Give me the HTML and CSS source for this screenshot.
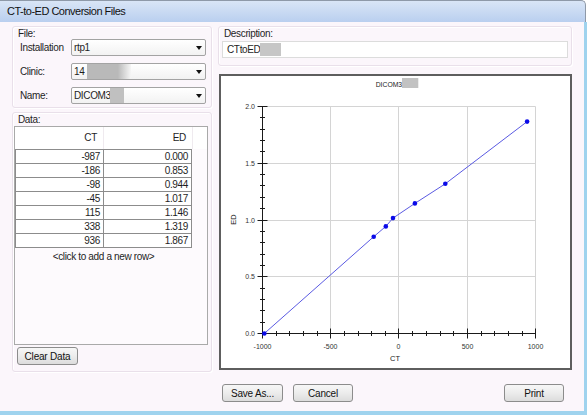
FILE: index.html
```html
<!DOCTYPE html>
<html>
<head>
<meta charset="utf-8">
<link rel="stylesheet" href="styles.css">
</head>
<body>
<div class="window">
  <div class="titlebar">CT-to-ED Conversion Files</div>
  <div class="client">
    <div class="main">
      <div class="col-left">
        <div class="group file-group">
          <div class="group-label">File:</div>
          <div class="field">
            <span class="field-label">Installation</span>
            <div class="combo"><span class="combo-text">rtp1</span><span class="arrow"></span></div>
          </div>
          <div class="field">
            <span class="field-label">Clinic:</span>
            <div class="combo"><span class="combo-text">14</span><span class="redact redact-clinic"></span><span class="arrow"></span></div>
          </div>
          <div class="field">
            <span class="field-label">Name:</span>
            <div class="combo"><span class="combo-text">DICOM3.</span><span class="redact redact-name"></span><span class="arrow"></span></div>
          </div>
        </div>
        <div class="group data-group">
          <div class="group-label">Data:</div>
          <div class="grid">
            <div class="grid-head"><span class="h-ct">CT</span><span class="h-ed">ED</span></div>
            <table class="rows">
              <tr><td>-987</td><td>0.000</td></tr>
              <tr><td>-186</td><td>0.853</td></tr>
              <tr><td>-98</td><td>0.944</td></tr>
              <tr><td>-45</td><td>1.017</td></tr>
              <tr><td>115</td><td>1.146</td></tr>
              <tr><td>338</td><td>1.319</td></tr>
              <tr><td>936</td><td>1.867</td></tr>
            </table>
            <div class="add-row">&lt;click to add a new row&gt;</div>
          </div>
          <button class="btn btn-clear">Clear Data</button>
        </div>
      </div>
      <div class="col-right">
        <div class="group desc-group">
          <div class="group-label">Description:</div>
          <div class="textbox">CTtoED<span class="redact-desc"></span></div>
        </div>
        <div class="chart">
          <svg class="plot" width="349" height="292" viewBox="0 0 349 292">
            <path fill="none" stroke="#d4d4d4" stroke-width="1" d="M109.5 30.5V257.5M177.5 30.5V257.5M246.5 30.5V257.5M314.5 30.5V257.5M41.5 30.5H314.5M41.5 87.5H314.5M41.5 144.5H314.5M41.5 200.5H314.5"/>
            <path fill="none" stroke="#1a1a1a" stroke-width="1" d="M41.5 30V258M41 257.5H315"/>
            <path fill="none" stroke="#1a1a1a" stroke-width="1" d="M36.5 30.5H46.5M36.5 87.5H46.5M36.5 144.5H46.5M36.5 200.5H46.5M36.5 257.5H46.5M41.5 252.5V262.5M109.5 252.5V262.5M177.5 252.5V262.5M246.5 252.5V262.5M314.5 252.5V262.5"/>
            <path fill="none" stroke="#1a1a1a" stroke-width="1" d="M39 246.5H44M39 234.5H44M39 223.5H44M39 212.5H44M39 189.5H44M39 178.5H44M39 166.5H44M39 155.5H44M39 132.5H44M39 121.5H44M39 109.5H44M39 98.5H44M39 75.5H44M39 64.5H44M39 53.5H44M39 41.5H44M55.5 255V260M68.5 255V260M82.5 255V260M96.5 255V260M123.5 255V260M137.5 255V260M150.5 255V260M164.5 255V260M191.5 255V260M205.5 255V260M219.5 255V260M232.5 255V260M260.5 255V260M273.5 255V260M287.5 255V260M301.5 255V260"/>
            <g class="tick-label" text-anchor="end">
              <text x="34" y="33">2.0</text>
              <text x="34" y="90">1.5</text>
              <text x="34" y="147">1.0</text>
              <text x="34" y="203">0.5</text>
              <text x="34" y="260">0.0</text>
            </g>
            <g class="tick-label" text-anchor="middle">
              <text x="41.5" y="272.5">-1000</text>
              <text x="109.5" y="272.5">-500</text>
              <text x="177.5" y="272.5">0</text>
              <text x="246.5" y="272.5">500</text>
              <text x="314.5" y="272.5">1000</text>
            </g>
            <text class="axis-title" text-anchor="middle" transform="translate(14.5 143.5) rotate(-90)">ED</text>
            <text class="axis-title" x="174" y="284.7" text-anchor="middle">CT</text>
            <text class="chart-title" x="154.7" y="11.3">DICOM3</text>
            <rect x="181" y="2" width="16.3" height="10" fill="#c2c2c2"/>
            <polyline fill="none" stroke="#5a5ae2" stroke-width="1" points="43.3,257.5 152.7,160.7 164.8,150.4 172,142.1 193.9,127.4 224.3,107.8 306.1,45.6"/>
            <g fill="#0a0ae8">
              <circle cx="43.3" cy="257.5" r="2.3"/>
              <circle cx="152.7" cy="160.7" r="2.3"/>
              <circle cx="164.8" cy="150.4" r="2.3"/>
              <circle cx="172" cy="142.1" r="2.3"/>
              <circle cx="193.9" cy="127.4" r="2.3"/>
              <circle cx="224.3" cy="107.8" r="2.3"/>
              <circle cx="306.1" cy="45.6" r="2.3"/>
            </g>
          </svg>
        </div>
      </div>
    </div>
    <div class="footer">
      <button class="btn btn-save">Save As...</button>
      <button class="btn btn-cancel">Cancel</button>
      <button class="btn btn-print">Print</button>
    </div>
  </div>
</div>
</body>
</html>
```

FILE: styles.css
```css
* { box-sizing: border-box; }

body {
  margin: 0;
  background: #ffffff;
  font-family: "Liberation Sans", Arial, sans-serif;
  font-size: 10px;
  letter-spacing: -0.35px;
  color: #1e1e1e;
}

.window {
  width: 587px;
  height: 415px;
  display: flex;
  flex-direction: column;
}

.titlebar {
  flex: none;
  height: 22px;
  margin-right: 1px;
  padding-left: 7px;
  line-height: 21px;
  font-size: 11px;
  letter-spacing: -0.5px;
  color: #111;
  background: linear-gradient(#d9e5f6, #b9cfef);
  border-top: 1px solid #8e99a8;
  border-right: 1px solid #8e99a8;
  border-top-right-radius: 5px;
}

.client {
  flex: 1;
  display: flex;
  flex-direction: column;
  padding: 4px 12px 0 12px;
  background: #fbf6fb;
  border-right: 3px solid #9fd3ee;
  border-bottom: 4px solid #9fd3ee;
}

.main {
  display: grid;
  grid-template-columns: 200px 354px;
  column-gap: 6px;
}

.col-left, .col-right {
  display: flex;
  flex-direction: column;
}

.group {
  border: 1px solid #e9e0ea;
  border-radius: 3px;
  box-shadow: inset 1px 1px 0 #ffffff, 1px 1px 0 #ffffff;
}

.group-label {
  height: 12px;
  line-height: 13px;
}

.file-group {
  height: 82px;
  padding: 0 5px 0 5px;
}

.field {
  display: flex;
  align-items: center;
  height: 17px;
  margin-top: 7px;
}

.file-group .group-label + .field { margin-top: 0; }

.field-label {
  width: 51px;
  margin-left: 2px;
}

.combo {
  position: relative;
  display: flex;
  align-items: center;
  width: 135px;
  height: 17px;
  padding-left: 2px;
  border: 1px solid #a3a3a3;
  border-radius: 2px;
  background: linear-gradient(#ffffff, #f2f2f2);
}

.arrow {
  margin-left: auto;
  margin-right: 3px;
  width: 0;
  height: 0;
  border-left: 3px solid transparent;
  border-right: 3px solid transparent;
  border-top: 4px solid #111;
}

.redact {
  position: absolute;
  top: 0;
  height: 15px;
}

.redact-clinic {
  left: 15px;
  width: 44px;
  background: linear-gradient(to right, #b9b9b9 70%, #f6f6f6);
}

.redact-name {
  left: 38px;
  width: 14px;
  background: #c0c0c0;
}

.data-group {
  height: 260px;
  margin-top: 4px;
}

.data-group .group-label { padding-left: 5px; }

.grid {
  width: 194px;
  height: 219px;
  margin: 1px 0 0 1px;
  border: 1px solid #a9a9a9;
  background: #fdfafd;
}

.grid-head {
  display: flex;
  height: 22px;
  background: #ffffff;
}

.h-ct {
  width: 89px;
  padding-right: 6px;
  text-align: right;
  line-height: 22px;
  border-right: 1px solid #efeaef;
}

.h-ed {
  width: 89px;
  padding-right: 6px;
  text-align: right;
  line-height: 22px;
  border-right: 1px solid #efeaef;
}

.rows {
  border-collapse: collapse;
  width: 177px;
  table-layout: fixed;
}

.rows tr { height: 14px; }

.rows td {
  width: 88px;
  padding: 0 3px 0 0;
  line-height: 12px;
  text-align: right;
  background: #ffffff;
  border: 1px solid #8c8c8c;
}

.add-row {
  width: 177px;
  margin-top: 2px;
  line-height: 14px;
  text-align: center;
}

.btn {
  height: 18px;
  padding: 0;
  font-family: inherit;
  font-size: 10px;
  letter-spacing: -0.2px;
  color: #111;
  border: 1px solid #8c8c8c;
  border-radius: 3px;
  background: linear-gradient(#f7f7f7 0%, #ececec 50%, #dcdcdc 100%);
}

.btn-clear {
  width: 61px;
  margin: 2px 0 0 4px;
}

.desc-group {
  height: 40px;
  padding: 0 3px;
}

.desc-group .group-label { padding-left: 2px; }

.textbox {
  display: flex;
  align-items: center;
  height: 17px;
  margin-top: 2px;
  padding-left: 4px;
  background: #ffffff;
  border: 1px solid #dcdcdc;
}

.redact-desc {
  display: inline-block;
  width: 21px;
  height: 13px;
  background: #c6c6c6;
}

.chart {
  width: 353px;
  height: 296px;
  margin: 8px 0 0 1px;
  background: #ffffff;
  border: 2px solid #5e5e5e;
}

.plot { display: block; }

.tick-label text {
  font-family: "Liberation Sans", Arial, sans-serif;
  font-size: 7px;
  letter-spacing: 0;
  fill: #333;
}

.axis-title {
  font-family: "Liberation Sans", Arial, sans-serif;
  font-size: 7.5px;
  letter-spacing: 0;
  fill: #222;
}

.chart-title {
  font-family: "Liberation Sans", Arial, sans-serif;
  font-size: 6.8px;
  letter-spacing: 0;
  fill: #222;
}

.footer {
  display: flex;
  margin-top: 12px;
  padding-left: 210px;
  padding-right: 8px;
}

.btn-save { width: 61px; }
.btn-cancel { width: 60px; margin-left: 10px; }
.btn-print { width: 60px; margin-left: auto; }
```
